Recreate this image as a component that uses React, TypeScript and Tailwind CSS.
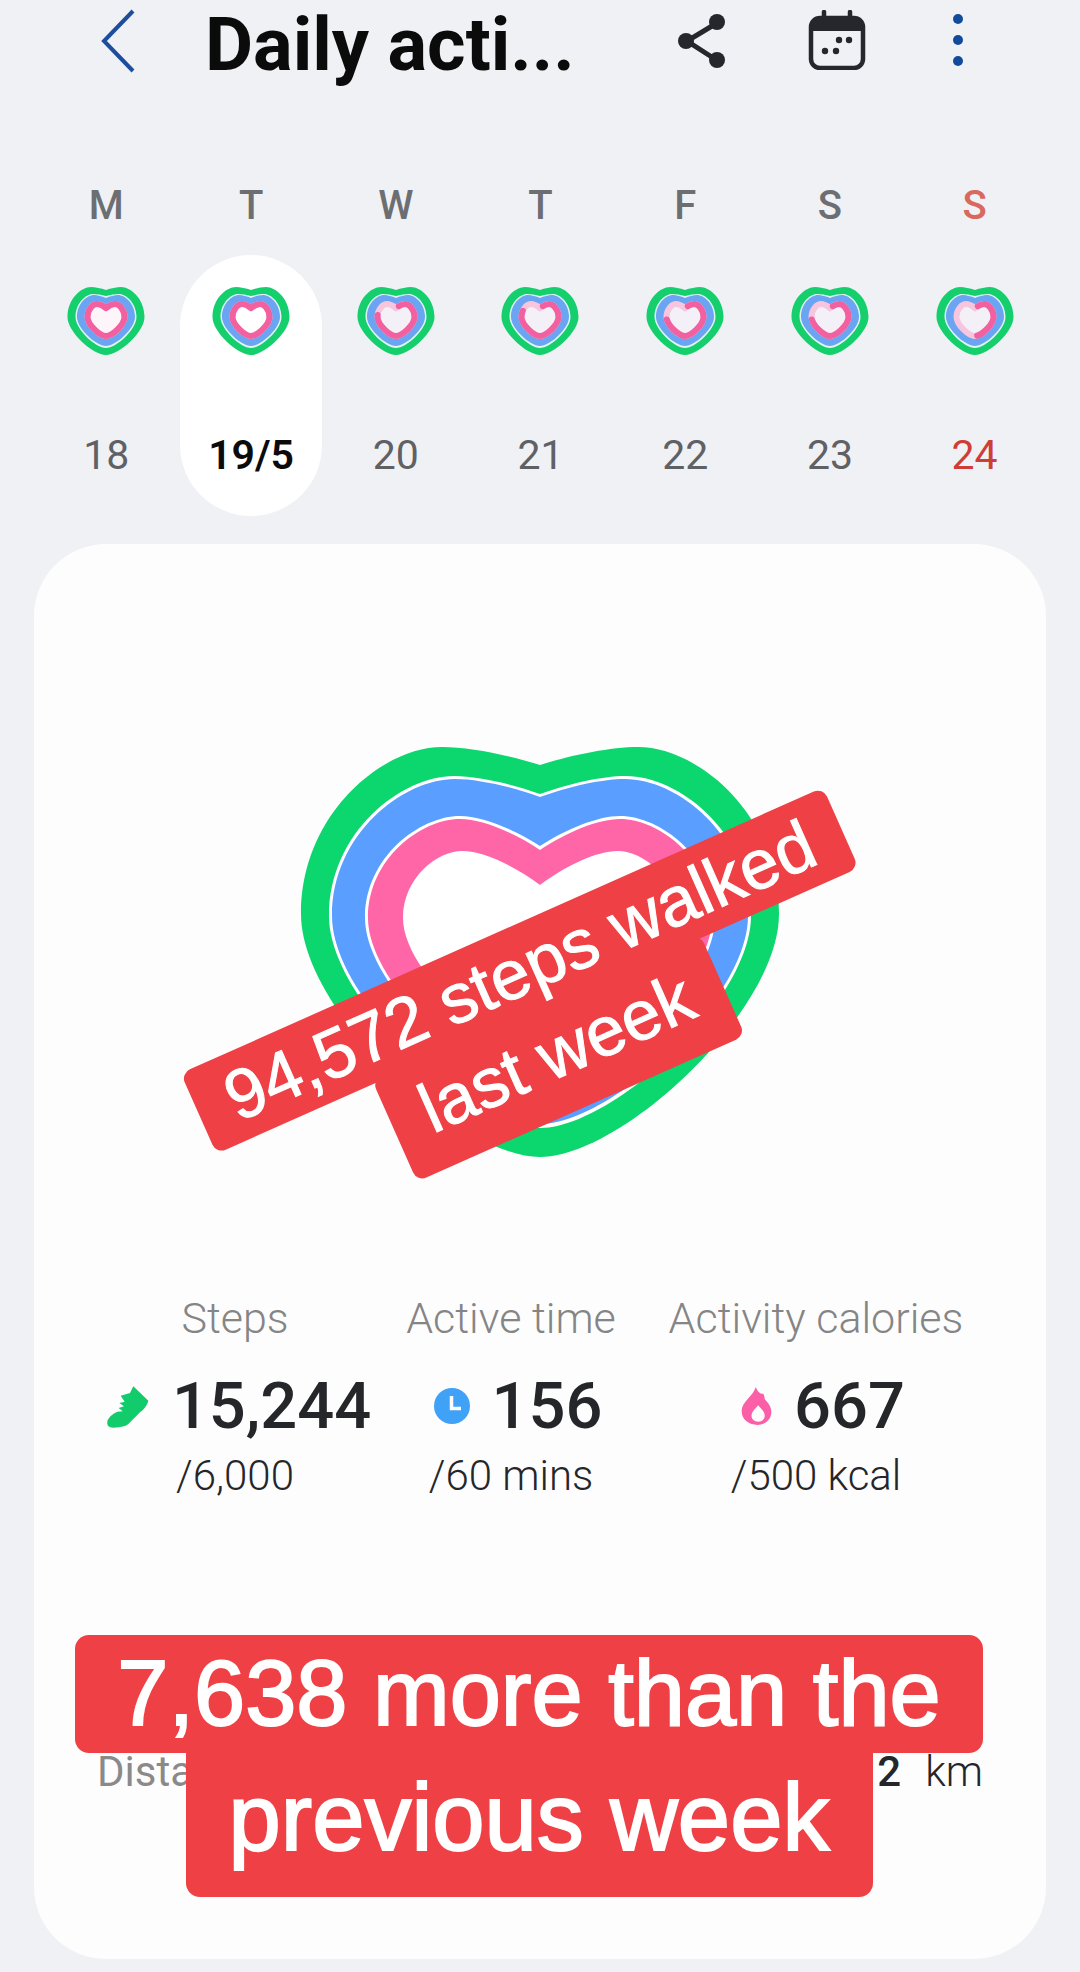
const roboto = "font-['Roboto',sans-serif]";

type Heart = { w: number; lobe: number; notch: number; top: number; wide: number; bottom: number };

// heart outline built from a few measured points
function heartPath({ w, lobe, notch, top, wide, bottom }: Heart) {
  const d = notch - top;
  const side = wide - 0.6 * (wide - top);
  const low = wide + 0.4 * (bottom - wide);
  const tip = 0.34 * w;
  const reach = lobe + 0.42 * (w - lobe);
  return [
    `M0 ${notch}`,
    `C${-0.32 * lobe} ${notch - 0.55 * d} ${-0.72 * lobe} ${top} ${-lobe} ${top}`,
    `C${-reach} ${top} ${-w} ${side} ${-w} ${wide}`,
    `C${-w} ${low} ${-tip} ${bottom} 0 ${bottom}`,
    `C${tip} ${bottom} ${w} ${low} ${w} ${wide}`,
    `C${w} ${side} ${reach} ${top} ${lobe} ${top}`,
    `C${0.72 * lobe} ${top} ${0.32 * lobe} ${notch - 0.55 * d} 0 ${notch}Z`,
  ].join(" ");
}

function BigHeart() {
  return (
    <svg width="490" height="420" viewBox="-245 0 490 420" className="block">
      <path d={heartPath({ w: 239, lobe: 98, notch: 23, top: 5, wide: 172, bottom: 415 })} fill="#0cd66e" />
      <path d={heartPath({ w: 211, lobe: 86, notch: 52, top: 34, wide: 174, bottom: 386 })} fill="#ffffff" />
      <path d={heartPath({ w: 208, lobe: 85, notch: 55, top: 37, wide: 174, bottom: 382 })} fill="#5a9eff" />
      <path d={heartPath({ w: 175, lobe: 80, notch: 104, top: 74, wide: 176, bottom: 350 })} fill="#ffffff" />
      <path d={heartPath({ w: 172, lobe: 80, notch: 108, top: 77, wide: 176, bottom: 346 })} fill="#ff66a8" />
      <path d={heartPath({ w: 137, lobe: 78, notch: 143, top: 109, wide: 176, bottom: 310 })} fill="#ffffff" />
    </svg>
  );
}

function SmallHeart({ done, inner }: { done: number; inner: string }) {
  const pink = heartPath({ w: 18.5, lobe: 9, notch: 22, top: 18, wide: 31, bottom: 50 });
  return (
    <svg width="80" height="70" viewBox="-40 0 80 70" className="block" fill="none">
      <path d={heartPath({ w: 38.5, lobe: 15, notch: 4, top: 1, wide: 31, bottom: 69 })} fill="#14cf6c" />
      <path d={heartPath({ w: 30.5, lobe: 13, notch: 10, top: 8, wide: 31, bottom: 62 })} fill="#dff5f0" />
      <path d={heartPath({ w: 29, lobe: 12, notch: 12, top: 9, wide: 31, bottom: 60 })} fill="#6ba4f2" />
      <path d={pink} fill={inner} stroke="#f6c6de" strokeWidth="6" />
      <path
        d={pink}
        stroke="#f2609f"
        strokeWidth="6"
        strokeLinecap="round"
        pathLength={100}
        strokeDasharray={`${done} 100`}
        strokeDashoffset={done === 100 ? 0 : -3}
        style={{ transform: "scaleX(-1)" }}
      />
    </svg>
  );
}

function ShareIcon() {
  return (
    <svg width="52" height="56" viewBox="0 0 52 56" fill="none">
      <path d="M40 11 10 29l31 20" stroke="#25272c" strokeWidth="5" />
      <circle cx="40" cy="10" r="8" fill="#25272c" />
      <circle cx="9" cy="29" r="8" fill="#25272c" />
      <circle cx="40" cy="48" r="8" fill="#25272c" />
    </svg>
  );
}

function CalendarIcon() {
  return (
    <svg width="58" height="60" viewBox="0 0 58 60" fill="none">
      <path d="M16 2v10M42 2v10" stroke="#25272c" strokeWidth="4.5" strokeLinecap="round" />
      <rect x="3" y="8" width="52" height="50" rx="9" stroke="#25272c" strokeWidth="4.5" />
      <path d="M3 17a9 9 0 0 1 9-9h34a9 9 0 0 1 9 9v4H3z" fill="#25272c" />
      <circle cx="17" cy="41" r="3.2" fill="#25272c" />
      <circle cx="28" cy="41" r="3.2" fill="#25272c" />
      <circle cx="31" cy="30" r="3.2" fill="#25272c" />
      <circle cx="41" cy="30" r="3.2" fill="#25272c" />
    </svg>
  );
}

function ShoeIcon() {
  return (
    <svg width="45" height="45" viewBox="25 15 135 135">
      <path
        d="M32 125Q40 108 62 98L78 97 66 87 82 82 68 72 84 68 72 50 100 42 110 22 155 65Q150 85 130 100L95 135Q85 145 50 146 28 146 32 125Z"
        fill="#12cc6b"
      />
    </svg>
  );
}

function ClockIcon() {
  return (
    <svg width="36" height="36" viewBox="0 0 36 36">
      <circle cx="18" cy="18" r="18" fill="#3fa2f7" />
      <path d="M17.5 8v12.5H27" stroke="#fff" strokeWidth="3.5" fill="none" />
    </svg>
  );
}

function FlameIcon() {
  return (
    <svg width="31" height="40" viewBox="40 23 94 119" fillRule="evenodd">
      <path
        d="M85 25C90 40 100 48 108 45 112 55 112 60 112 62 122 72 132 85 132 100 132 125 112 140 90 140 65 140 42 125 42 98 42 70 75 55 85 25ZM92 80C82 92 72 100 72 112 72 124 82 130 92 130 102 130 112 124 112 112 112 100 102 92 92 80Z"
        fill="#fb5fa8"
      />
    </svg>
  );
}

const days = [
  { letter: "M", date: "18", done: 100, inner: "#fdf5fa" },
  { letter: "T", date: "19/5", done: 100, inner: "#ffffff", active: true },
  { letter: "W", date: "20", done: 74, inner: "#f4f0f8" },
  { letter: "T", date: "21", done: 78, inner: "#f4f0f8" },
  { letter: "F", date: "22", done: 70, inner: "#f4f0f8" },
  { letter: "S", date: "23", done: 70, inner: "#f4f0f8" },
  { letter: "S", date: "24", done: 45, inner: "#f4f0f8", sunday: true },
];

const stats = [
  { label: "Steps", value: "15,244", goal: "/6,000", icon: <ShoeIcon />, nudge: "ml-[6px]" },
  { label: "Active time", value: "156", goal: "/60 mins", icon: <ClockIcon />, nudge: "ml-[14px]" },
  { label: "Activity calories", value: "667", goal: "/500 kcal", icon: <FlameIcon />, nudge: "ml-[14px]" },
];

export default function App() {
  return (
    <div className={`relative h-[1972px] w-[1080px] overflow-hidden bg-[#eff1f5] ${roboto}`}>
      {/* Header */}
      <header className="flex h-[92px] items-center pl-[100px]">
        <svg width="36" height="64" viewBox="0 0 36 64" fill="none" className="mt-[-10px]">
          <path d="M33 2 4 32l29 30" stroke="#1d4e9e" strokeWidth="4" />
        </svg>
        <h1 className="mt-[-3px] ml-[69px] w-[400px] text-[74px] leading-none font-bold whitespace-nowrap text-[#0b0b0c]">
          Daily acti...
        </h1>
        <div className="mt-[-12px] ml-[72px] flex items-center">
          <ShareIcon />
          <div className="ml-[79px]">
            <CalendarIcon />
          </div>
          <div className="ml-[87px] flex flex-col gap-[11px]">
            <span className="h-[10px] w-[10px] rounded-full bg-[#134b9c]" />
            <span className="h-[10px] w-[10px] rounded-full bg-[#134b9c]" />
            <span className="h-[10px] w-[10px] rounded-full bg-[#134b9c]" />
          </div>
        </div>
      </header>

      {/* Week strip */}
      <div className="mt-[91px] grid w-[1047px] grid-cols-7 pl-[34px]">
        {days.map((d, i) => (
          <div key={i} className="relative flex flex-col items-center">
            <span
              className={`text-[40px] leading-[46px] font-medium ${d.sunday ? "text-[#d9685f]" : "text-[#6c6e72]"}`}
            >
              {d.letter}
            </span>
            <div
              className={`mt-[26px] flex h-[261px] w-[142px] flex-col items-center rounded-full pt-[31px] ${d.active ? "bg-white" : ""}`}
            >
              <SmallHeart done={d.done} inner={d.inner} />
              <span
                className={`mt-[76px] text-[41px] leading-[46px] ${d.active ? "font-semibold text-[#0b0b0c]" : d.sunday ? "text-[#cf3d38]" : "text-[#5f6165]"}`}
              >
                {d.date}
              </span>
            </div>
          </div>
        ))}
      </div>

      {/* Card */}
      <main className="absolute top-[544px] left-[34px] h-[1415px] w-[1012px] rounded-[72px] bg-[#fdfdfe]">
        <div className="flex justify-center pt-[198px]">
          <BigHeart />
        </div>

        <div className="mt-[132px] grid grid-cols-[260px_292px_318px] pl-[71px]">
          {stats.map((s) => (
            <div key={s.label} className="flex flex-col items-center whitespace-nowrap">
              <span className="text-[43px] leading-[48px] font-light text-[#858585]">{s.label}</span>
              <div className={`mt-[28px] flex items-center gap-[22px] ${s.nudge}`}>
                {s.icon}
                <span className="text-[65px] leading-[72px] font-medium text-[#25262a]">{s.value}</span>
              </div>
              <span className="mt-[10px] text-[42px] leading-[48px] font-light text-[#25262a]">{s.goal}</span>
            </div>
          ))}
        </div>

        <div className="mt-[248px] flex items-center justify-between px-[63px] text-[42px] leading-[48px]">
          <span className="text-[#8a8a8a]">Distance</span>
          <span className="flex gap-[24px] text-[#25262a]">
            <span className="font-medium">2</span>
            <span className="font-light">km</span>
          </span>
        </div>
      </main>

      {/* Tilted caption */}
      <div className="absolute top-[922px] left-[193px] flex w-[697px] -rotate-[24deg] flex-col items-center font-['Liberation_Sans',sans-serif] text-[70px] whitespace-nowrap text-white [-webkit-text-stroke:1px_white]">
        <div className="h-[88px] rounded-[10px] bg-[#ee4045] px-[32px] leading-[88px]">94,572 steps walked</div>
        <div className="mt-[-4px] h-[111px] rounded-[10px] bg-[#ee4045] px-[34px] leading-[100px]">last week</div>
      </div>

      {/* Bottom caption */}
      <div className="absolute top-[1635px] left-[75px] flex w-[908px] flex-col items-center font-['Liberation_Sans',sans-serif] text-[92px] whitespace-nowrap text-white [-webkit-text-stroke:2px_white]">
        <div className="relative z-10 h-[118px] w-[908px] rounded-[14px] bg-[#ee4045] text-center leading-[116px]">
          7,638 more than the
        </div>
        <div className="h-[144px] w-[687px] rounded-b-[14px] bg-[#ee4045] text-center text-[94px] leading-[130px]">
          previous week
        </div>
      </div>
    </div>
  );
}
